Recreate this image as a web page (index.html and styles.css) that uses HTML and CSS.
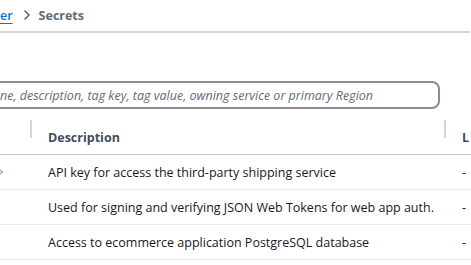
FILE: index.html
```html
<!DOCTYPE html>
<html>
<head>
<meta charset="utf-8">
<link rel="stylesheet" href="styles.css">
</head>
<body>
<div class="page">
  <nav class="crumbs">
    <a class="crumb-link" href="#">er</a>
    <svg class="chev" width="10" height="12" viewBox="0 0 10 12"><path d="M2.5 1.5 L7 6 L2.5 10.5" fill="none" stroke="#5f6b7a" stroke-width="1.6"/></svg>
    <span class="crumb-current">Secrets</span>
  </nav>
  <div class="rule"></div>
  <div class="search">
    <span class="placeholder">ne, description, tag key, tag value, owning service or primary Region</span>
  </div>
  <div class="table">
    <div class="row head">
      <div class="cell first"></div>
      <div class="cell desc"><span class="sep"></span>Description</div>
      <div class="cell last"><span class="sep"></span>L</div>
    </div>
    <div class="row">
      <div class="cell first"><svg class="cut" width="4" height="6" viewBox="0 0 4 6"><path d="M0 1 L2.5 3 L0 5" fill="none" stroke="#7aa7d9" stroke-width="1.2"/></svg></div>
      <div class="cell desc">API key for access the third-party shipping service</div>
      <div class="cell last">-</div>
    </div>
    <div class="row">
      <div class="cell first"></div>
      <div class="cell desc">Used for signing and verifying JSON Web Tokens for web app auth.</div>
      <div class="cell last">-</div>
    </div>
    <div class="row">
      <div class="cell first"></div>
      <div class="cell desc">Access to ecommerce application PostgreSQL database</div>
      <div class="cell last">-</div>
    </div>
  </div>
</div>
</body>
</html>
```

FILE: styles.css
```css
* { box-sizing: border-box; }
html, body { margin: 0; padding: 0; background: #fff; }
body {
  width: 471px;
  height: 265px;
  overflow: hidden;
  font-family: "Open Sans", "Noto Sans", sans-serif;
  color: #16191f;
}
.page { display: flex; flex-direction: column; }
.crumbs {
  display: flex;
  align-items: center;
  height: 30px;
  font-size: 12.5px;
  gap: 7px;
}
.crumb-link {
  color: #0972d3;
  text-decoration: underline;
  text-underline-offset: 3px;
  font-weight: 600;
}
.chev { margin: 0 0 0 2px; }
.crumb-current { color: #5f6b7a; font-weight: 700; }
.rule {
  width: 470px;
  height: 2px;
  background: #d5d5d9;
  margin-top: 1px;
}
.search {
  margin-top: 48px;
  margin-left: -12px;
  width: 452px;
  height: 28px;
  border: 2px solid #8c8c94;
  border-radius: 8px;
  display: flex;
  align-items: center;
  padding-left: 10px;
}
.placeholder {
  font-style: italic;
  color: #5f6b7a;
  font-size: 12.5px;
  white-space: nowrap;
}
.table { margin-top: 11px; display: flex; flex-direction: column; }
.row {
  display: grid;
  grid-template-columns: 30px 414px 1fr;
  height: 35px;
  align-items: center;
  border-bottom: 1px solid #e9ebed;
  font-size: 12.5px;
}
.row.head {
  height: 35px;
  border-bottom: 1px solid #c6c6cd;
  color: #414d5c;
  font-weight: 700;
}
.cell { display: flex; align-items: center; white-space: nowrap; position: relative; }
.desc, .last { padding-left: 18px; }
.sep {
  position: absolute;
  left: 0;
  top: -9px;
  width: 2px;
  height: 18px;
  background: #d1d5db;
}
.cut { display: block; }
```
